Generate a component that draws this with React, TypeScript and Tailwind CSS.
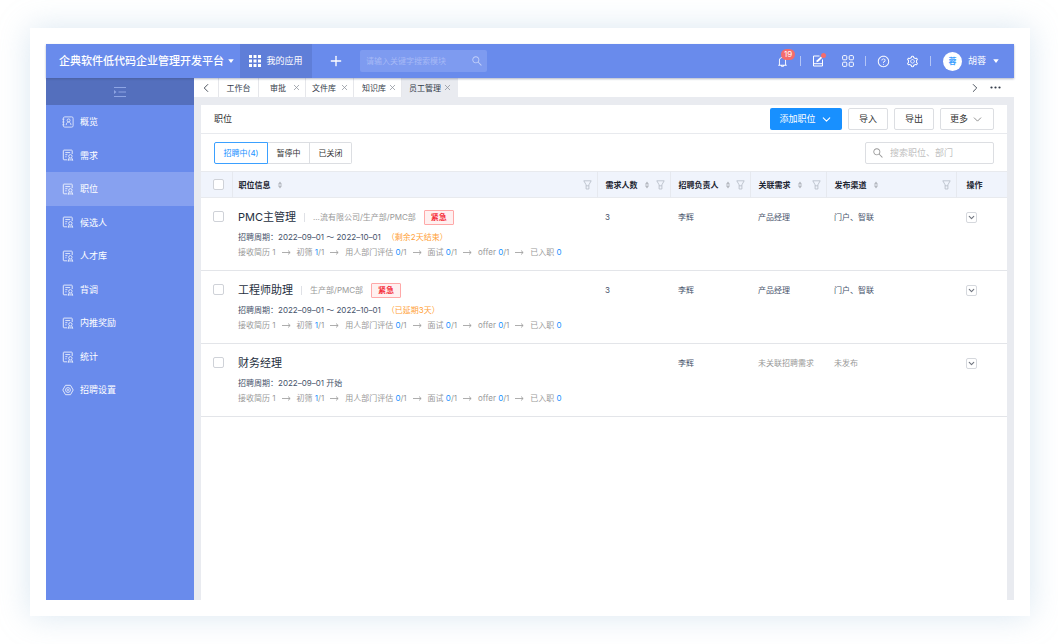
import React from 'react'
import {
  AiOutlineBell,
  AiOutlineQuestionCircle,
  AiOutlineSearch,
  AiOutlineSetting,
} from 'react-icons/ai'
import { ChevronDown, ChevronLeft, ChevronRight, Plus, X } from 'lucide-react'

interface Job {
  title: string
  dept?: string
  urgent?: boolean
  period: string
  notice?: string
  count?: number
  owner: string
  demand: string
  channel: string
  published: boolean
}

const MENU = [
  { label: '概览', icon: 'contact' },
  { label: '需求', icon: 'doc' },
  { label: '职位', icon: 'doc' },
  { label: '候选人', icon: 'doc' },
  { label: '人才库', icon: 'doc' },
  { label: '背调', icon: 'doc' },
  { label: '内推奖励', icon: 'doc' },
  { label: '统计', icon: 'doc' },
  { label: '招聘设置', icon: 'setting' },
]

const TABS = [
  { label: '审批', size: 'w-[47px] gap-[6px]' },
  { label: '文件库', size: 'w-12 gap-1' },
  { label: '知识库', size: 'w-12 gap-[2px]' },
]

const STEPS = [
  { label: '接收简历', total: '1' },
  { label: '初筛', done: '1', total: '/1' },
  { label: '用人部门评估', done: '0', total: '/1' },
  { label: '面试', done: '0', total: '/1' },
  { label: 'offer', done: '0', total: '/1' },
  { label: '已入职', done: '0' },
]

const JOBS: Job[] = [
  {
    title: 'PMC主管理',
    dept: '...流有限公司/生产部/PMC部',
    urgent: true,
    period: '2022–09–01 ～ 2022–10–01',
    notice: '（剩余2天结束）',
    count: 3,
    owner: '李辉',
    demand: '产品经理',
    channel: '门户、智联',
    published: true,
  },
  {
    title: '工程师助理',
    dept: '生产部/PMC部',
    urgent: true,
    period: '2022–09–01 ～ 2022–10–01',
    notice: '（已延期3天）',
    count: 3,
    owner: '李辉',
    demand: '产品经理',
    channel: '门户、智联',
    published: true,
  },
  {
    title: '财务经理',
    period: '2022–09–01 开始',
    owner: '李辉',
    demand: '未关联招聘需求',
    channel: '未发布',
    published: false,
  },
]

function ContactIcon() {
  return (
    <svg viewBox="0 0 12 12" className="h-3 w-3" fill="none" stroke="currentColor" strokeWidth="0.9">
      <rect x="1.400" y=".9" width="9.700" height="10.200" rx="1.300" />
      <path d="M.4 3.200H2.400M.4 6H2.400M.4 8.800H2.400" />
      <circle cx="6.600" cy="4.400" r="1.500" />
      <path d="M4.200 9.100c.1-1.900 1.100-3.100 2.400-3.100s2.300 1.200 2.400 3.100" />
    </svg>
  )
}

function DocIcon() {
  return (
    <svg viewBox="0 0 12 12" className="h-3 w-3" fill="none" stroke="currentColor" strokeWidth="1">
      <path d="M5.200 10.800H1.900A.6.6 0 0 1 1.300 10.200V1.700A.6.6 0 0 1 1.900 1.100H9.600A.6.6 0 0 1 10.200 1.700V5" />
      <path d="M3.300 3.600H8.200M3.300 5.700H5.400M3.300 7.800H4.600" />
      <circle cx="8.400" cy="7.300" r="1.700" />
      <path d="M7.300 8.700 6.100 11.300 7.500 10.900H9.300L10.800 11.300 9.600 8.700" />
    </svg>
  )
}

function HexSettingIcon() {
  return (
    <svg viewBox="0 0 12 12" className="h-3 w-3" fill="none" stroke="currentColor" strokeWidth="1">
      <path d="M3.500 1.300H8.500L11.200 6 8.500 10.700H3.500L.8 6Z" strokeLinejoin="round" />
      <circle cx="6" cy="6" r="2.400" />
      <circle cx="6" cy="6" r=".6" />
    </svg>
  )
}

function MenuIcon({ name }: { name: string }) {
  if (name === 'contact') return <ContactIcon />
  if (name === 'setting') return <HexSettingIcon />
  return <DocIcon />
}

function NoteIcon() {
  return (
    <svg viewBox="0 0 12 12" className="h-3 w-3" fill="none" stroke="currentColor">
      <path d="M7.500 1H1.500V11H10.500V4.500" />
      <path d="M1.500 8.700H10.500" />
      <path d="M4.300 7.300 4.900 5.300 9 1.400 10.300 2.700 6.200 6.700Z" fill="currentColor" stroke="none" />
    </svg>
  )
}

function AppsIcon() {
  return (
    <svg viewBox="0 0 12 12" className="h-3 w-3" fill="none" stroke="currentColor" strokeWidth="1">
      <rect x=".6" y=".6" width="4.200" height="4.200" rx="1" />
      <rect x="7.200" y=".6" width="4.200" height="4.200" rx="1" />
      <rect x=".6" y="7.200" width="4.200" height="4.200" rx="1" />
      <rect x="7.200" y="7.200" width="4.200" height="4.200" rx="1" />
    </svg>
  )
}

function StepArrow() {
  return (
    <svg viewBox="0 0 9 5" className="h-[5px] w-[9px]" fill="none" stroke="currentColor" strokeWidth="0.8">
      <path d="M0 2.500H8M6 .5 8.200 2.500 6 4.500" />
    </svg>
  )
}

function Caret() {
  return (
    <svg viewBox="0 0 8 5" className="h-[4px] w-[6px]" fill="currentColor">
      <path d="M.3 0H7.700L4 5Z" />
    </svg>
  )
}

function Sorter() {
  return (
    <svg viewBox="0 0 6 8" className="h-2 w-[6px] text-[#b4b8bf]" fill="currentColor">
      <path d="M3 .5 5.200 3.400H.8ZM3 7.500.8 4.600H5.200Z" />
    </svg>
  )
}

function FilterIcon() {
  return (
    <svg viewBox="0 0 9 10" className="h-[10px] w-[9px] text-[#b4bac5]" fill="none" stroke="currentColor" strokeWidth="0.8">
      <path d="M.8.8H8.200L5.900 4.800V9H3.100V4.800Z" strokeLinejoin="round" />
      <path d="M3.100 5.800H5.900" />
    </svg>
  )
}

function Divider() {
  return <span className="h-[10px] w-px bg-white/50" />
}

function Checkbox({ label }: { label: string }) {
  return (
    <input
      type="checkbox"
      aria-label={label}
      className="block h-[11px] w-[11px] appearance-none rounded-[2px] border border-[#cfd2d8] bg-white"
    />
  )
}

interface HeadCellProps {
  label: string
  pad?: string
  sortable?: boolean
}

function HeadCell({ label, pad = 'pl-2', sortable = true }: HeadCellProps) {
  return (
    <th className={`${pad} border-l border-[#e6e9ef] text-left font-bold`}>
      <div className="flex items-center justify-between pr-[5px]">
        <span className="flex items-center gap-[6px] whitespace-nowrap">
          {label}
          {sortable && <Sorter />}
        </span>
        {sortable && <FilterIcon />}
      </div>
    </th>
  )
}

function TopBar() {
  return (
    <header className="z-10 flex h-[34px] shrink-0 items-center bg-[#698bec] pr-[15px] text-white shadow-[0_1px_2px_rgba(60,70,110,0.4)]">
      <button className="flex w-[194px] items-center gap-1 whitespace-nowrap pl-[13px] text-[11px] font-medium">
        企典软件低代码企业管理开发平台
        <Caret />
      </button>
      <button className="flex h-full w-[72px] items-center justify-center gap-[5px] bg-[#5f7ed8] text-[9px]">
        <svg viewBox="0 0 12 12" className="h-3 w-3" fill="currentColor">
          <path d="M0 0h3v3H0zM4.500 0h3v3h-3zM9 0h3v3H9zM0 4.500h3v3H0zM4.500 4.500h3v3h-3zM9 4.500h3v3H9zM0 9h3v3H0zM4.500 9h3v3h-3zM9 9h3v3H9z" />
        </svg>
        我的应用
      </button>
      <button aria-label="新增" className="flex w-12 justify-center">
        <Plus size={16} strokeWidth={2} />
      </button>
      <label className="flex h-[22px] w-[127px] items-center rounded-[2px] bg-[#7e9bf0] px-1">
        <input
          type="text"
          aria-label="搜索模块"
          placeholder="请输入关键字搜索模块"
          className="min-w-0 flex-1 bg-transparent pl-[2px] text-[8px] outline-none placeholder:text-[#a6b9f6]"
        />
        <AiOutlineSearch size={12} className="text-[#c3d0f9]" />
      </label>

      <div className="ml-auto flex items-center">
        <button aria-label="通知" className="relative mr-[11px]">
          <AiOutlineBell size={13} />
          <span className="absolute -top-[6px] left-[5px] rounded-full bg-[#f56c6c] px-[3px] text-[8px] leading-[11px]">19</span>
        </button>
        <Divider />
        <button aria-label="便签" className="relative ml-[11px] mr-[18px]">
          <NoteIcon />
          <span className="absolute -right-[2px] -top-[2px] h-[5px] w-[5px] rounded-full bg-[#f56c6c]" />
        </button>
        <button aria-label="应用" className="mr-[11px]">
          <AppsIcon />
        </button>
        <Divider />
        <button aria-label="帮助" className="mx-[11px]">
          <AiOutlineQuestionCircle size={13} />
        </button>
        <button aria-label="设置" className="mx-[5px] mr-[11px]">
          <AiOutlineSetting size={13} />
        </button>
        <Divider />
        <button className="ml-3 flex items-center gap-[6px] text-[9px]">
          <span className="flex h-[19px] w-[19px] items-center justify-center rounded-full bg-white text-[8px] font-bold text-[#3ba0ff]">
            蓉
          </span>
          <span className="pr-px">胡蓉</span>
          <Caret />
        </button>
      </div>
    </header>
  )
}

function Sidebar() {
  return (
    <aside className="w-[148px] shrink-0 bg-[#698bec] text-white">
      <button aria-label="收起菜单" className="flex h-[27px] w-full items-center justify-center bg-[#546fbd] text-[#8ea5e4]">
        <svg viewBox="0 0 12 10" className="h-[10px] w-3" fill="none" stroke="currentColor">
          <path d="M0 .5H12M4.500 5H12M0 9.500H12" />
          <path d="M0 3 2.500 5 0 7Z" fill="currentColor" stroke="none" />
        </svg>
      </button>
      <nav className="grid h-[302px] grid-rows-9">
        {MENU.map((item) => (
          <a
            key={item.label}
            href="#"
            className={
              item.label === '职位'
                ? 'flex items-center gap-[6px] bg-[#87a1f0] pl-4 text-[9px]'
                : 'flex items-center gap-[6px] pl-4 text-[9px]'
            }
          >
            <span className="opacity-80">
              <MenuIcon name={item.icon} />
            </span>
            {item.label}
          </a>
        ))}
      </nav>
    </aside>
  )
}

function TabBar() {
  return (
    <div className="flex h-[19px] shrink-0 items-stretch bg-white text-[8px] text-[#333b48]">
      <button aria-label="向左" className="flex w-[25px] items-center justify-center border-r border-[#e6e7eb]">
        <ChevronLeft size={14} strokeWidth={1.5} />
      </button>
      <button className="w-10 border-r border-[#e6e7eb]">工作台</button>
      {TABS.map((tab) => (
        <div key={tab.label} className={`${tab.size} flex items-center justify-end border-r border-[#e6e7eb] pr-1`}>
          <button>{tab.label}</button>
          <button aria-label={`关闭${tab.label}`} className="text-[#8c919b]">
            <X size={9} strokeWidth={2} />
          </button>
        </div>
      ))}
      <div className="flex w-14 items-center justify-end gap-[2px] bg-[#e9ebf0] pr-[6px]">
        <button>员工管理</button>
        <button aria-label="关闭员工管理" className="text-[#8c919b]">
          <X size={9} strokeWidth={2} />
        </button>
      </div>
      <div className="ml-auto flex items-center gap-2 pr-[13px]">
        <button aria-label="向右">
          <ChevronRight size={14} strokeWidth={1.5} />
        </button>
        <button aria-label="更多标签">
          <svg viewBox="0 0 11 3" className="h-[3px] w-[11px]" fill="currentColor">
            <circle cx="1.500" cy="1.500" r="1.100" />
            <circle cx="5.500" cy="1.500" r="1.100" />
            <circle cx="9.500" cy="1.500" r="1.100" />
          </svg>
        </button>
      </div>
    </div>
  )
}

function JobRow({ job }: { job: Job }) {
  return (
    <tr className="h-[73px] border-b border-[#e3e5e9] align-top text-[8px] leading-4 text-[#46526a]">
      <td className="pl-3 pt-[13px]">
        <Checkbox label={`选择${job.title}`} />
      </td>
      <td className="whitespace-nowrap pl-[6px] pt-[11px]">
        <div className="flex h-4 items-center gap-2">
          <a href="#" className="text-[11px] text-[#263040]">{job.title}</a>
          {job.dept && <span className="border-l border-[#dfe1e6] pl-2 leading-[9px] text-[#999]">{job.dept}</span>}
          {job.urgent && (
            <span className="flex h-[15px] w-[30px] items-center justify-center rounded-[1px] border border-[#ffa8a8] bg-[#fff0f0] font-bold text-[#f5333f]">
              紧急
            </span>
          )}
        </div>
        <div className="mt-[5px] leading-[15px]">
          招聘周期：{job.period}
          {job.notice && <span className="ml-[6px] text-[#ff9f38]">{job.notice}</span>}
        </div>
        <div className="flex items-center gap-[6px] leading-[15px] text-[#999]">
          {STEPS.map((step, i) => (
            <React.Fragment key={step.label}>
              {i > 0 && <StepArrow />}
              <span>
                {step.label} <span className="text-[#1890ff]">{step.done}</span>
                {step.total}
              </span>
            </React.Fragment>
          ))}
        </div>
      </td>
      <td className="pl-2 pt-[11px]">{job.count}</td>
      <td className="pl-2 pt-[11px]">{job.owner}</td>
      <td className={job.published ? 'pl-2 pt-[11px]' : 'pl-2 pt-[11px] text-[#999]'}>{job.demand}</td>
      <td className={job.published ? 'pl-2 pt-[11px]' : 'pl-2 pt-[11px] text-[#999]'}>{job.channel}</td>
      <td className="pl-[10px] pt-[14px]">
        <button
          aria-label={`操作${job.title}`}
          className="flex h-[11px] w-[11px] items-center justify-center rounded-[2px] border border-[#d5d8dd] text-[#70757f]"
        >
          <ChevronDown size={9} strokeWidth={3} className="shrink-0" />
        </button>
      </td>
    </tr>
  )
}

function JobsPanel() {
  return (
    <section className="mx-[7px] mt-2 flex-1 bg-white">
      {/* Title and actions */}
      <div className="flex h-[29px] items-center border-b border-[#e8eaee] px-[13px] text-[9px] text-[#333]">
        <h1>职位</h1>
        <div className="ml-auto flex items-center gap-[6px]">
          <button className="flex h-[22px] w-[72px] items-center justify-center gap-1 rounded-[2px] bg-[#1890ff] text-white">
            添加职位
            <ChevronDown size={13} strokeWidth={2} />
          </button>
          <button className="h-[22px] w-10 rounded-[2px] border border-[#dcdee2]">导入</button>
          <button className="h-[22px] w-10 rounded-[2px] border border-[#dcdee2]">导出</button>
          <button className="flex h-[22px] w-[54px] items-center justify-center gap-[3px] rounded-[2px] border border-[#dcdee2]">
            更多
            <ChevronDown size={13} strokeWidth={1.5} className="text-[#777]" />
          </button>
        </div>
      </div>

      {/* Status filter and search */}
      <div className="flex h-[37px] items-center justify-between px-[13px] text-[8px] text-[#333]">
        <div className="flex">
          <button className="h-[22px] w-[54px] rounded-l-[2px] border border-[#3ba0ff] text-[#1890ff]">招聘中(4)</button>
          <button className="h-[22px] w-[42px] border-y border-r border-[#dcdee2]">暂停中</button>
          <button className="h-[22px] w-[42px] rounded-r-[2px] border-y border-r border-[#dcdee2]">已关闭</button>
        </div>
        <label className="flex h-[22px] w-[129px] items-center gap-[6px] rounded-[2px] border border-[#dcdee2] px-[6px]">
          <AiOutlineSearch size={12} className="text-[#999]" />
          <input
            type="text"
            aria-label="搜索职位、部门"
            placeholder="搜索职位、部门"
            className="min-w-0 flex-1 text-[9px] outline-none placeholder:text-[#bfbfbf]"
          />
        </label>
      </div>

      <table className="w-full table-fixed border-collapse">
        <colgroup>
          <col className="w-[31px]" />
          <col />
          <col className="w-[73px]" />
          <col className="w-20" />
          <col className="w-[76px]" />
          <col className="w-[130px]" />
          <col className="w-[51px]" />
        </colgroup>
        <thead>
          <tr className="h-[26px] border-y border-[#e8eaee] bg-[#f0f4fc] text-[8px] text-[#1f2733]">
            <th className="pl-3">
              <Checkbox label="全选" />
            </th>
            <HeadCell label="职位信息" pad="pl-[6px]" />
            <HeadCell label="需求人数" />
            <HeadCell label="招聘负责人" />
            <HeadCell label="关联需求" />
            <HeadCell label="发布渠道" />
            <HeadCell label="操作" pad="pl-[10px]" sortable={false} />
          </tr>
        </thead>
        <tbody>
          {JOBS.map((job) => (
            <JobRow key={job.title} job={job} />
          ))}
        </tbody>
      </table>
    </section>
  )
}

export default function App() {
  return (
    <div className="flex min-h-screen bg-white py-7 pl-[30px] pr-7 font-['Inter','Noto_Sans_CJK_SC',sans-serif]">
      <div className="flex flex-1 bg-white p-4 shadow-[0_0_30px_rgba(150,185,215,0.35)]">
        <div className="flex min-w-0 flex-1 flex-col">
          <TopBar />
          <div className="flex flex-1">
            <Sidebar />
            <main className="flex min-w-0 flex-1 flex-col bg-[#e9ebf0]">
              <TabBar />
              <JobsPanel />
            </main>
          </div>
        </div>
      </div>
    </div>
  )
}
